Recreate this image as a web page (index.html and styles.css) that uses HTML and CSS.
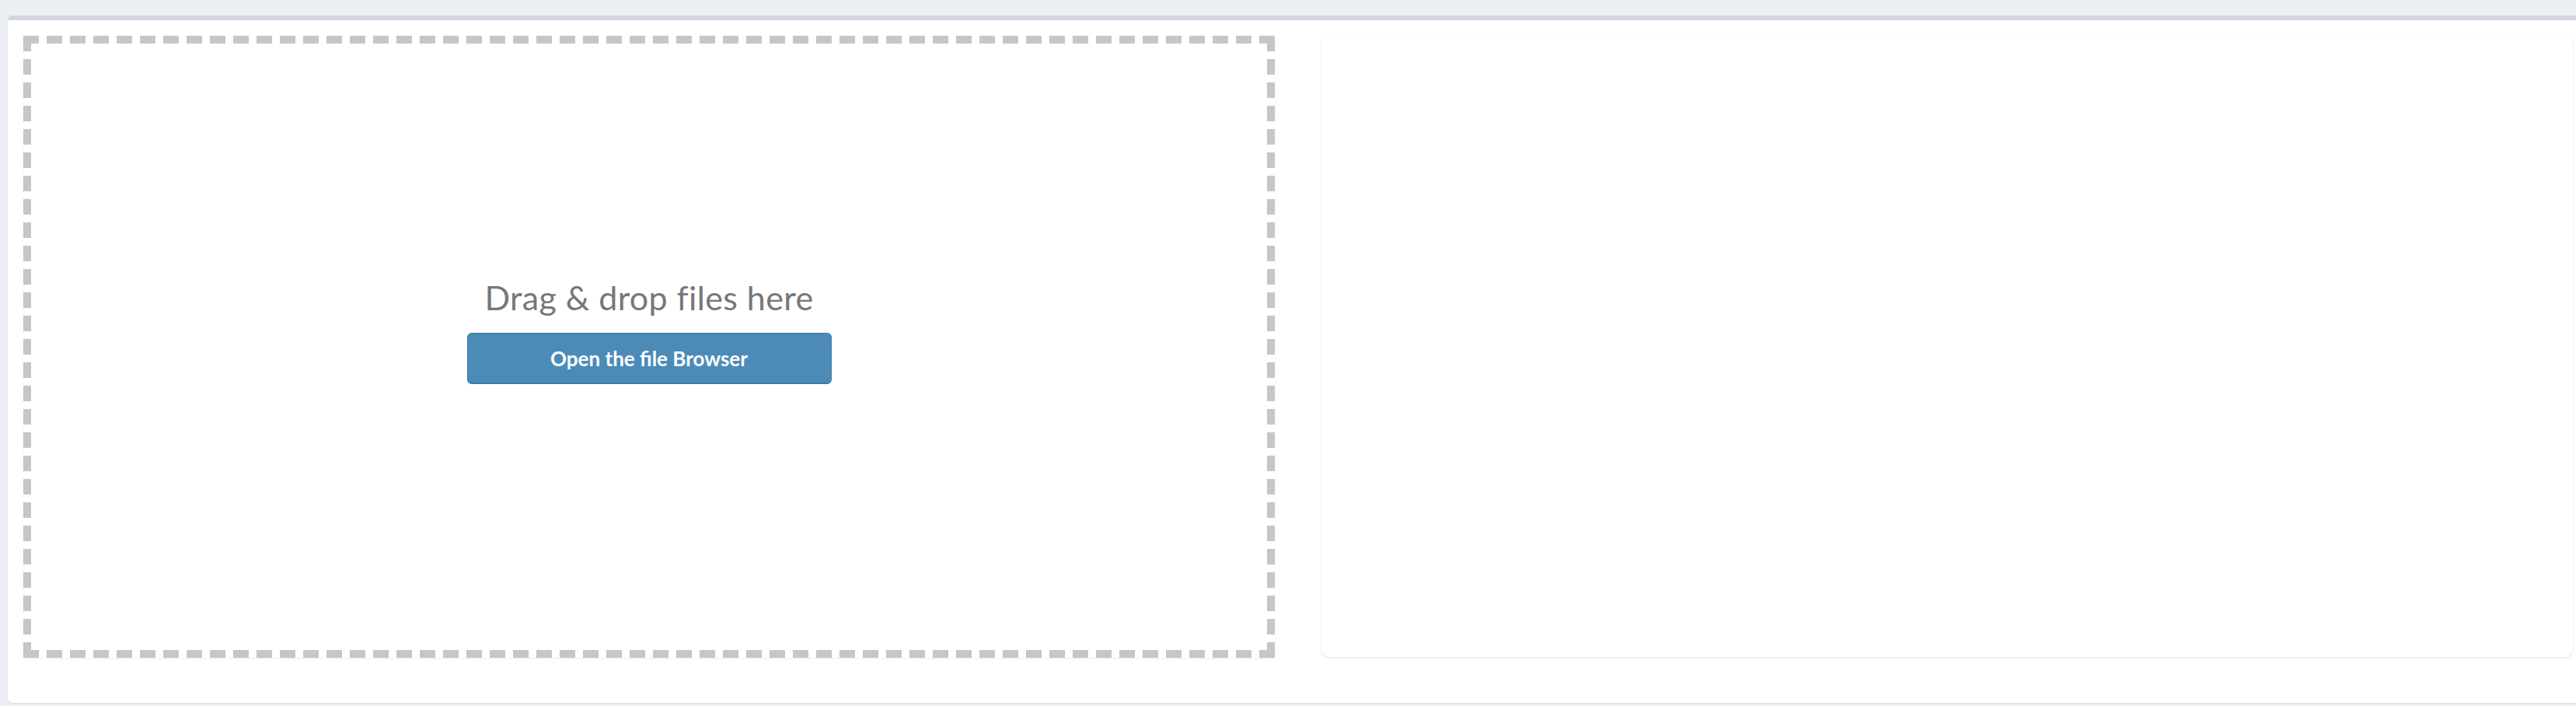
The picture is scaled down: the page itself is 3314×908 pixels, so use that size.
FILE: index.html
```html
<!DOCTYPE html>
<html lang="en">
<head>
<meta charset="utf-8">
<title>Upload</title>
<link rel="stylesheet" href="styles.css">
</head>
<body>
  <div class="card">
    <div class="row">
      <div class="dropzone">
        <div class="drop-title">Drag &amp; drop files here</div>
        <button class="btn-open" type="button">Open the file Browser</button>
      </div>
      <div class="panel"></div>
    </div>
  </div>
</body>
</html>
```

FILE: styles.css
```css
html, body {
  margin: 0;
  padding: 0;
}
body {
  background: #ecf0f5;
  overflow: hidden;
  width: 3314px;
  height: 908px;
  font-family: Lato, "Open Sans", sans-serif;
}
.card {
  box-sizing: border-box;
  margin: 20px 0 0 10px;
  width: 3320px;
  height: 884px;
  background: #fff;
  border-top: 6px solid #d2d6de;
  border-radius: 6px;
  padding: 20px 20px 58px 20px;
  box-shadow: 0 1px 2px rgba(0, 0, 0, 0.1);
}
.row {
  display: grid;
  grid-template-columns: 1610px 1610px;
  column-gap: 60px;
  height: 800px;
}
.dropzone {
  --dash: #c6c6c6;
  box-sizing: border-box;
  height: 800px;
  padding: 10px 10px 50px 10px;
  display: flex;
  flex-direction: column;
  align-items: center;
  justify-content: center;
  background:
    repeating-linear-gradient(to right, var(--dash) 0 20px, transparent 20px 30px) left top / 100% 10px no-repeat,
    repeating-linear-gradient(to right, var(--dash) 0 20px, transparent 20px 30px) left bottom / 100% 10px no-repeat,
    repeating-linear-gradient(to bottom, var(--dash) 0 20px, transparent 20px 30px) left top / 10px 100% no-repeat,
    repeating-linear-gradient(to bottom, var(--dash) 0 20px, transparent 20px 30px) right top / 10px 100% no-repeat,
    #fff;
  box-shadow: 0 1px 2px rgba(0, 0, 0, 0.08);
}
.drop-title {
  font-size: 43px;
  letter-spacing: 0.4px;
  line-height: 49px;
  color: #777;
  font-weight: 400;
}
.btn-open {
  margin-top: 21px;
  width: 469px;
  height: 66px;
  box-sizing: border-box;
  background: #4c8bb7;
  border: 1px solid #3e7aa6;
  border-bottom-width: 2px;
  border-radius: 6px;
  color: #fff;
  font-family: Lato, "Open Sans", sans-serif;
  font-weight: 700;
  font-size: 26px;
  padding: 0;
  cursor: pointer;
}
.panel {
  height: 799px;
  background: #fff;
  border-radius: 10px;
  box-shadow: 0 1px 3px rgba(0, 0, 0, 0.12);
}
```
